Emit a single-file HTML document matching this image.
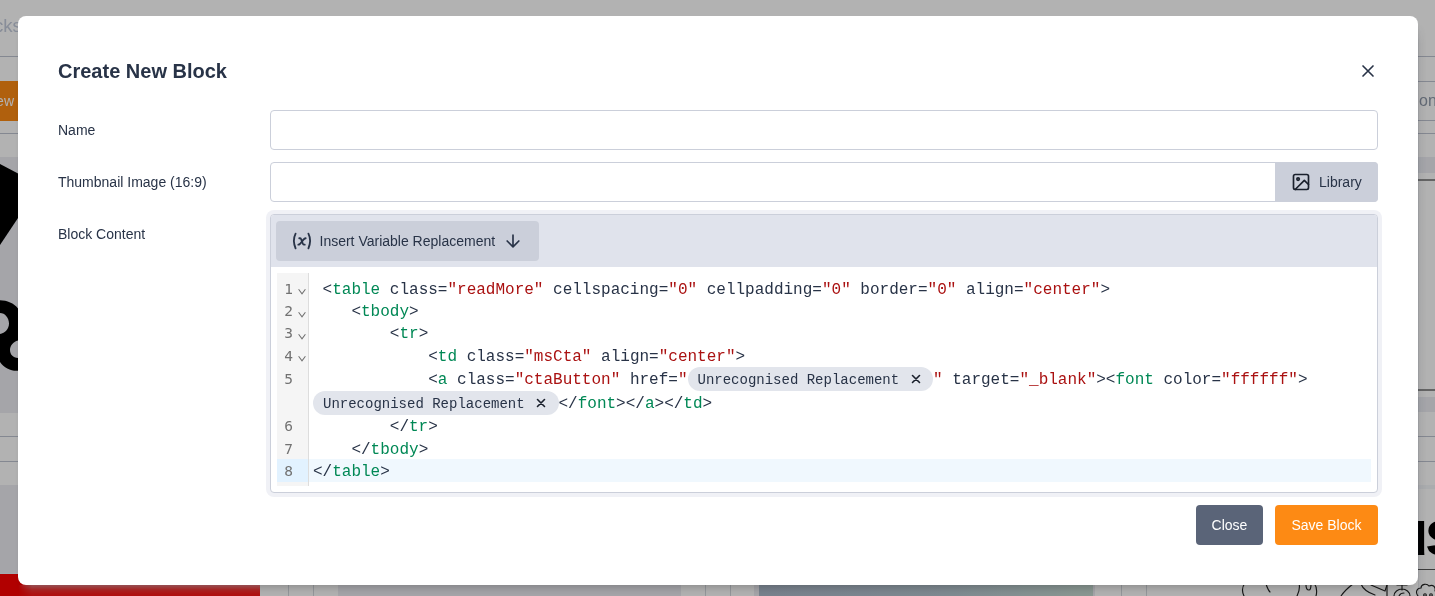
<!DOCTYPE html>
<html lang="en">
<head>
<meta charset="utf-8">
<title>Create New Block</title>
<style>
*{box-sizing:border-box}
html,body{margin:0;padding:0}
body{width:1435px;height:596px;overflow:hidden;position:relative;background:#fff;font-family:"Liberation Sans",Arial,sans-serif;font-size:14px;color:#283347}
/* ---------- page behind the overlay ---------- */
#page{position:absolute;left:0;top:0;width:1435px;height:596px;overflow:hidden;background:#fff}
#page div{position:absolute}
.hl{left:0;width:1435px;height:1px;background:#bec3d0}
.band{left:0;width:1435px;background:#ecedf3}
#overlay{position:absolute;left:0;top:0;width:1435px;height:596px;background:rgba(0,0,0,.3)}
#rsh{position:absolute;left:1418px;top:22px;width:9px;height:574px;background:linear-gradient(to right,rgba(30,40,60,.17) 0,rgba(30,40,60,.06) 1.500px,rgba(0,0,0,.03) 5px,rgba(0,0,0,0) 9px);-webkit-mask-image:linear-gradient(to bottom,transparent 0,#000 22px);mask-image:linear-gradient(to bottom,transparent 0,#000 22px)}
/* ---------- modal ---------- */
#modal{position:absolute;left:18px;top:16px;width:1400px;height:569px;background:#fff;border-radius:8px;
 box-shadow:0 8px 10px -6px rgba(0,0,0,.24);will-change:transform}
#modal h2{position:absolute;left:40px;top:40px;margin:0;font-size:20px;line-height:30px;font-weight:700;color:#283347}
#x{position:absolute;left:1340px;top:45px;width:20px;height:20px}
.lbl{position:absolute;left:40px;line-height:21px;font-size:14px;color:#283347}
.inp{position:absolute;left:252px;width:1108px;height:40px;border:1px solid #cbcfda;border-radius:4px;background:#fff}
#lib{position:absolute;left:1257px;top:146px;width:103px;height:40px;background:#cbcfda;border-radius:0 4px 4px 0;color:#283347}
#lib svg{position:absolute;left:16px;top:10px;width:20px;height:20px}
#lib span{position:absolute;left:44px;top:9.5px;line-height:21px}
#ed{position:absolute;left:252px;top:198px;width:1108px;height:279px;border:1px solid #cbcfda;border-radius:4px;background:#fff;box-shadow:0 0 0 4px #f0f1f6}
#tb{position:absolute;left:0;top:0;width:1106px;height:52px;background:#e0e3ec;border-radius:3px 3px 0 0}
#ivr{position:absolute;left:5px;top:6px;width:263px;height:40px;background:#cbcfda;border-radius:4px;color:#283347}
#ivr .t{position:absolute;left:43.500px;top:9.5px;line-height:21px;white-space:nowrap}
#ivr svg{position:absolute}
/* code editor */
#cm{position:absolute;left:6px;top:58px;width:1094px;height:213px;font-family:"Liberation Mono","DejaVu Sans Mono",monospace;font-size:16px;color:#283347}
#gut{position:absolute;left:0;top:0;width:32px;height:213px;background:#f5f5f5;border-right:1px solid #ddd;padding-top:4px;font-family:"DejaVu Sans Mono","Liberation Mono",monospace;font-size:14.500px;color:#727272}
#gut .g{position:relative;height:22.4px;line-height:22.4px}
#gut .g.tall{height:48px}
#gut .g.act{background:#e2f2ff}
#gut .n{position:absolute;left:0;top:0.700px;width:16px;text-align:right}
#gut .tall .n{top:1.500px}
#gut svg{position:absolute;left:21px;top:10.300px;width:8px;height:8px}
#code{position:absolute;left:32px;top:0;width:1062px;height:213px;padding-top:4px}
.ln{height:22.4px;line-height:19.4px;padding-top:3.600px;white-space:pre;padding-left:4px}
.ln.c{height:24px;line-height:21px}
.ln.act{background:#f0f8fe}
.tg{color:#008855}
.st{color:#aa1111}
.chip{display:inline-block;vertical-align:top;top:-3.600px;height:24px;width:245.500px;line-height:27px;background:#e2e5ec;border-radius:12px;font-size:14px;color:#283347;padding-left:10px;position:relative}
.chip svg{position:absolute;left:223.200px;top:7px;width:10px;height:10px}
.btn{position:absolute;top:489px;height:40px;border-radius:4px;color:#fff;line-height:40px;text-align:center;font-size:14px}
</style>
</head>
<body>
<div id="page">
  <!-- top header -->
  <div style="left:-5.650px;top:10.500px;font-size:18.600px;line-height:30px;color:#c3cbdb;will-change:transform">cks</div>
  <div class="hl" style="top:56px"></div>
  <div style="left:-20px;top:81px;width:38px;height:40px;background:#fd8a14;color:#fff;line-height:40px;text-align:right;padding-right:4px;font-size:14px;will-change:transform">ew</div>
  <div style="left:1418.500px;top:88.500px;font-size:16px;line-height:24px;color:#8e98a8;will-change:transform">on</div>
  <div class="hl" style="left:1400px;top:81px;width:35px"></div>
  <div class="hl" style="left:1400px;top:120px;width:35px"></div>
  <div class="hl" style="top:133px"></div>
  <!-- card area -->
  <div class="band" style="top:157px;height:256px;width:30px"></div>
  <div class="band" style="left:1400px;top:157px;height:16px;width:35px"></div>
  <div style="left:1400px;top:178.500px;width:35px;height:2.500px;background:#909090"></div>
  <div style="left:1400px;top:388.500px;width:35px;height:2.500px;background:#909090"></div>
  <div class="band" style="left:1400px;top:397px;height:15px;width:35px"></div>
  <div class="hl" style="top:436px"></div>
  <div class="hl" style="top:461px"></div>
  <div class="band" style="top:485px;height:111px;width:1100px"></div>
  <div class="hl" style="left:1400px;top:485px;width:35px;background:#f4f6fa;height:4px"></div>
  <svg style="position:absolute;left:0;top:157px" width="30" height="256" viewBox="0 0 30 256">
    <polygon points="0,7 18,16.5 18,61 0,88" fill="#000"/>
    <path fill-rule="evenodd" d="M0 143.300C7 143.500 14 146 18 151.600L18 183.400C13 184.500 10 189 10 193C10 197.500 13 200.500 18 201L18 213.700C12 214.500 4 211 0 205Z M0 156C5 156 9 161 9 166.500C9 172 5 176 0 177Z" fill="#000"/>
  </svg>
  <!-- bottom row -->
  <div style="left:0;top:574px;width:260px;height:22px;background:#fe0000"></div>
  <div style="left:0;top:573px;width:260px;height:1px;background:#eaf4fb"></div>
  <div style="left:18px;top:585px;width:242px;height:11px;background:linear-gradient(to bottom,#ff858d 0%,#fe5656 27%,#fe3535 45%,#fe2020 73%,#fe1717 100%);-webkit-mask-image:linear-gradient(to right,transparent 0,#000 14px);mask-image:linear-gradient(to right,transparent 0,#000 14px)"></div>
  <div style="left:260px;top:575px;width:78px;height:21px;background:#fff"></div>
  <div style="left:288px;top:575px;width:1px;height:21px;background:#d5d9df"></div>
  <div style="left:313px;top:575px;width:1px;height:21px;background:#d5d9df"></div>
  <div style="left:681px;top:575px;width:73px;height:21px;background:#fff"></div>
  <div style="left:705px;top:575px;width:1px;height:21px;background:#d5d9df"></div>
  <div style="left:730px;top:575px;width:1px;height:21px;background:#d5d9df"></div>
  <div style="left:759px;top:575px;width:334px;height:21px;background:linear-gradient(90deg,#adbacb,#b6c6d0 55%,#c6dad2)"></div>
  <div style="left:1095px;top:575px;width:79px;height:21px;background:#fff"></div>
  <div style="left:1121px;top:575px;width:1px;height:21px;background:#d5d9df"></div>
  <div style="left:1146px;top:575px;width:1px;height:21px;background:#d5d9df"></div>
  <div style="left:1175px;top:569px;width:260px;height:27px;background:#fff;border-top:1px solid #555"></div>
  <svg style="position:absolute;left:1175px;top:570px" width="260" height="26" viewBox="0 0 260 26" fill="none" stroke="#222" stroke-width="1.150" stroke-linecap="round">
    <path d="M70 13c-3 4-3 9-1 13"/><path d="M91 14c1 3 2 6 4 8"/><path d="M124 13c1 4 0 9-2 13"/><path d="M131 15c0 3 1 5 3 5s2-3 2-6"/><path d="M139 13c3 4 3 9 2 13"/>
    <path d="M178 14c-4 3-8 6-12 12"/><path d="M186 14c2 5 8 9 14 11"/><path d="M196 15l14 6 2-6"/><path d="M212 14v12"/>
    <path d="M222 15h10M227 15v5M219 26c0-4 4-7 8-7s8 3 8 7"/><path d="M224 26c1-2 3-3 5-3"/>
    <path d="M243 26c-3-4-1-8 3-8c0-4 6-5 8-2c4-2 7 1 6 5"/><circle cx="250" cy="25" r="1.300"/><circle cx="256" cy="25" r="1.300"/>
  </svg>
  <div style="left:1389.600px;top:500.600px;font-size:64px;line-height:64px;font-weight:700;color:#000;letter-spacing:-4px;white-space:nowrap">us</div>
</div>
<div id="overlay"></div>
<div id="rsh"></div>

<div id="modal">
  <h2>Create New Block</h2>
  <svg id="x" viewBox="0 0 24 24" fill="none" stroke="#283347" stroke-width="2" stroke-linecap="round"><path d="M18 6L6 18M6 6l12 12"/></svg>

  <div class="lbl" style="top:103.5px">Name</div>
  <div class="inp" style="top:94px"></div>

  <div class="lbl" style="top:155.5px">Thumbnail Image (16:9)</div>
  <div class="inp" style="top:146px"></div>
  <div id="lib">
    <svg viewBox="0 0 24 24" fill="none" stroke="#1a202c" stroke-width="2" stroke-linecap="round" stroke-linejoin="round"><rect x="3" y="3" width="18" height="18" rx="2"/><circle cx="8.5" cy="8.5" r="1.5"/><path d="M21 15l-5-5L5 21"/></svg>
    <span>Library</span>
  </div>

  <div class="lbl" style="top:207.5px">Block Content</div>
  <div id="ed">
    <div id="tb">
      <div id="ivr">
        <svg style="left:15px;top:8.600px;width:22px;height:22px" viewBox="0 0 24 24" fill="none" stroke="#283347" stroke-width="2" stroke-linecap="round" stroke-linejoin="round">
          <path d="M5 4c-2.500 5-2.500 10 0 16m14-16c2.500 5 2.500 10 0 16m-10-11h1c1 0 1 1 2.016 3.527c.984 2.473.984 3.473 1.984 3.473h1"/><path d="M8 16c1.500 0 3-2 4-3.500s2.500-3.500 4-3.500"/>
        </svg>
        <span class="t">Insert Variable Replacement</span>
        <svg style="left:227.200px;top:10px;width:20px;height:20px" viewBox="0 0 24 24" fill="none" stroke="#283347" stroke-width="2" stroke-linecap="round" stroke-linejoin="round"><path d="M12 5v14M19 12l-7 7-7-7"/></svg>
      </div>
    </div>
    <div id="cm">
      <div id="gut">
        <div class="g"><span class="n">1</span><svg viewBox="0 0 8 8" fill="none" stroke="#707070" stroke-width="1.050"><path d="M0.600 2.200l3.400 4.700 3.400-4.700"/></svg></div>
        <div class="g"><span class="n">2</span><svg viewBox="0 0 8 8" fill="none" stroke="#707070" stroke-width="1.050"><path d="M0.600 2.200l3.400 4.700 3.400-4.700"/></svg></div>
        <div class="g"><span class="n">3</span><svg viewBox="0 0 8 8" fill="none" stroke="#707070" stroke-width="1.050"><path d="M0.600 2.200l3.400 4.700 3.400-4.700"/></svg></div>
        <div class="g"><span class="n">4</span><svg viewBox="0 0 8 8" fill="none" stroke="#707070" stroke-width="1.050"><path d="M0.600 2.200l3.400 4.700 3.400-4.700"/></svg></div>
        <div class="g tall"><span class="n">5</span></div>
        <div class="g"><span class="n">6</span></div>
        <div class="g"><span class="n">7</span></div>
        <div class="g act"><span class="n">8</span></div>
      </div>
      <div id="code">
<div class="ln"> &lt;<span class="tg">table</span> class=<span class="st">"readMore"</span> cellspacing=<span class="st">"0"</span> cellpadding=<span class="st">"0"</span> border=<span class="st">"0"</span> align=<span class="st">"center"</span>&gt;</div>
<div class="ln">    &lt;<span class="tg">tbody</span>&gt;</div>
<div class="ln">        &lt;<span class="tg">tr</span>&gt;</div>
<div class="ln">            &lt;<span class="tg">td</span> class=<span class="st">"msCta"</span> align=<span class="st">"center"</span>&gt;</div>
<div class="ln c">            &lt;<span class="tg">a</span> class=<span class="st">"ctaButton"</span> href=<span class="st">"</span><span class="chip">Unrecognised Replacement<svg viewBox="0 0 10 10" fill="none" stroke="#1a202c" stroke-width="1.6" stroke-linecap="round"><path d="M1.500 1.500l7 7M8.500 1.500l-7 7"/></svg></span><span class="st">"</span> target=<span class="st">"_blank"</span>&gt;&lt;<span class="tg">font</span> color=<span class="st">"ffffff"</span>&gt;</div>
<div class="ln c" style="padding-left:4px"><span class="chip">Unrecognised Replacement<svg viewBox="0 0 10 10" fill="none" stroke="#1a202c" stroke-width="1.6" stroke-linecap="round"><path d="M1.500 1.500l7 7M8.500 1.500l-7 7"/></svg></span>&lt;/<span class="tg">font</span>&gt;&lt;/<span class="tg">a</span>&gt;&lt;/<span class="tg">td</span>&gt;</div>
<div class="ln">        &lt;/<span class="tg">tr</span>&gt;</div>
<div class="ln">    &lt;/<span class="tg">tbody</span>&gt;</div>
<div class="ln act">&lt;/<span class="tg">table</span>&gt;</div>
      </div>
    </div>
  </div>

  <div class="btn" style="left:1178px;width:67px;background:#5a6478">Close</div>
  <div class="btn" style="left:1257px;width:103px;background:#fd8a14">Save Block</div>
</div>
</body>
</html>
